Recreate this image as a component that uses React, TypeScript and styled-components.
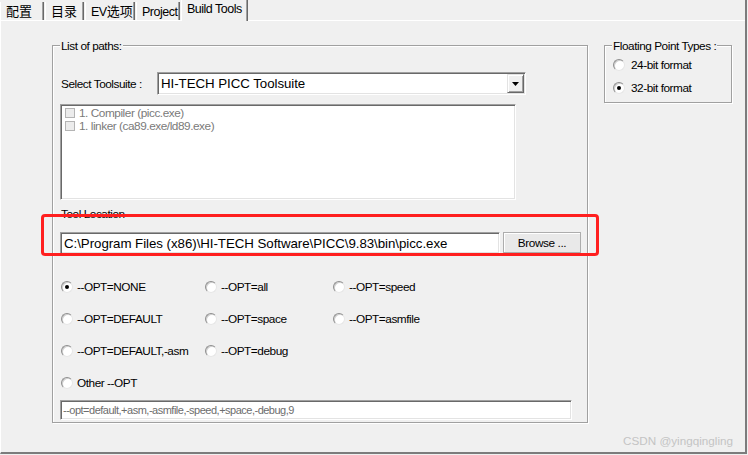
import React from 'react'
import styled, { createGlobalStyle } from 'styled-components'

const GlobalStyle = createGlobalStyle`
  html, body {
    margin: 0;
    padding: 0;
    background: #f0f0f0;
  }

  body {
    font-family: 'Liberation Sans', Arial, 'Noto Sans CJK SC', sans-serif;
    color: #000;
  }
`

const Window = styled.div`
  width: 747px;
  height: 454px;
  box-sizing: border-box;
  border-right: 2px solid #7c7c7c;
  background: #f0f0f0;
  display: flex;
  flex-direction: column;
  overflow: hidden;
`

const TabBar = styled.div`
  height: 20px;
  flex: none;
  display: flex;
  align-items: flex-end;
  gap: 1px;
`

const Tab = styled.div<{ $active?: boolean; $w: number }>`
  position: relative;
  z-index: 1;
  box-sizing: border-box;
  width: ${(p) => p.$w}px;
  height: ${(p) => (p.$active ? 21 : 18)}px;
  margin-bottom: ${(p) => (p.$active ? -1 : 0)}px;
  padding: ${(p) => (p.$active ? 1 : 2)}px 0 0 5px;
  font-size: 12.5px;
  line-height: 16px;
  letter-spacing: -0.5px;
  white-space: nowrap;
  background: #f0f0f0;
  border-left: 1px solid #fff;
  border-right: 1px solid #696969;
  box-shadow: inset -1px 0 0 #a0a0a0;

  .cjk {
    font-size: 13px;
    letter-spacing: 0;
  }
`

const Page = styled.div`
  position: relative;
  flex: 1;
  box-sizing: border-box;
  border-top: 1px solid #fff;
  border-left: 1px solid #fff;
  border-bottom: 2px solid #7c7c7c;
  padding: 24px 0 0 51px;
  display: flex;
  align-items: flex-start;
  gap: 16px;
`

const GroupBox = styled.div<{ $w: number; $h: number }>`
  position: relative;
  box-sizing: border-box;
  width: ${(p) => p.$w}px;
  height: ${(p) => p.$h}px;
  border: 1px solid #a0a0a0;
  box-shadow: inset 1px 1px 0 #fff, 1px 1px 0 #fff;
`

const Legend = styled.span`
  position: absolute;
  top: -6px;
  left: 7px;
  padding: 0 1px;
  background: #f0f0f0;
  font-size: 11.8px;
  line-height: 13px;
  letter-spacing: -0.45px;
  white-space: nowrap;
`

const GroupBody = styled.div<{ $top: number; $left: number }>`
  display: flex;
  flex-direction: column;
  align-items: flex-start;
  padding: ${(p) => p.$top}px 0 0 ${(p) => p.$left}px;
`

const Label = styled.div`
  font-size: 11.8px;
  line-height: 14px;
  letter-spacing: -0.45px;
  white-space: nowrap;
`

const SelectRow = styled.div`
  display: flex;
  align-items: flex-start;
  height: 23px;
`

const SelectLabel = styled(Label)`
  width: 97px;
  padding: 5px 0 0 1px;
  box-sizing: border-box;
`

const sunken = `
  box-sizing: border-box;
  background: #fff;
  border: 1px solid;
  border-color: #a0a0a0 #fff #fff #a0a0a0;
  box-shadow: inset 1px 1px 0 #696969, inset -1px -1px 0 #e3e3e3;
`

const Combo = styled.div`
  ${sunken}
  width: 369px;
  height: 23px;
  display: flex;
  align-items: center;
  padding: 1px 1px 1px 3px;
  font-size: 13.3px;
  letter-spacing: -0.05px;
`

const DropButton = styled.div`
  margin-left: auto;
  box-sizing: border-box;
  width: 17px;
  height: 19px;
  background: #f0f0f0;
  border: 1px solid;
  border-color: #e3e3e3 #696969 #696969 #e3e3e3;
  box-shadow: inset 1px 1px 0 #fff, inset -1px -1px 0 #a0a0a0;
  display: flex;
  align-items: center;
  justify-content: center;
`

const ListBox = styled.div`
  ${sunken}
  margin-top: 9px;
  width: 456px;
  height: 96px;
  padding: 1px 0 0 4px;
`

const ListItem = styled.div`
  display: flex;
  align-items: center;
  gap: 4px;
  height: 13px;
  font-size: 11.8px;
  letter-spacing: -0.45px;
  color: #7a7a7a;
  white-space: nowrap;
`

const CheckBox = styled.span`
  box-sizing: border-box;
  width: 10px;
  height: 10px;
  border: 1px solid #b4b4b4;
  background: #ececec;
`

const ToolLabel = styled(Label)`
  margin-top: 7px;
  padding-left: 1px;
`

const PathRow = styled.div`
  margin-top: 11px;
  display: flex;
  align-items: flex-start;
  gap: 3px;
`

const PathInput = styled.div`
  ${sunken}
  width: 440px;
  height: 22px;
  display: flex;
  align-items: center;
  padding-left: 3px;
  font-size: 13.3px;
  letter-spacing: -0.05px;
  white-space: nowrap;
`

const Button = styled.div`
  box-sizing: border-box;
  width: 78px;
  height: 21px;
  display: flex;
  align-items: center;
  justify-content: center;
  background: #e9e9e9;
  border: 1px solid #adadad;
  box-shadow: inset 1px 1px 0 #fff;
  font-size: 11.8px;
  letter-spacing: -0.4px;
`

const RadioGrid = styled.div`
  margin: 17px 0 0 1px;
  display: grid;
  grid-template-columns: 144px 128px auto;
  grid-auto-rows: 32px;
`

const RadioOption = styled.label<{ $gap: number; $h?: number }>`
  display: flex;
  align-items: center;
  gap: ${(p) => p.$gap}px;
  height: ${(p) => p.$h ?? 32}px;
  font-size: 11.8px;
  letter-spacing: -0.45px;
  white-space: nowrap;
`

const RadioDot = styled.span<{ $checked?: boolean }>`
  position: relative;
  flex: none;
  box-sizing: border-box;
  width: 12px;
  height: 12px;
  border-radius: 50%;
  background: #fff;
  border: 1px solid;
  border-color: #8e8e8e #e6e6e6 #e6e6e6 #8e8e8e;
  box-shadow: inset 1px 1px 0 #cfcfcf;

  &::after {
    content: '';
    display: ${(p) => (p.$checked ? 'block' : 'none')};
    position: absolute;
    left: 3px;
    top: 3px;
    width: 4px;
    height: 4px;
    border-radius: 50%;
    background: #000;
  }
`

const OptInput = styled.div`
  ${sunken}
  margin-top: 1px;
  width: 512px;
  height: 20px;
  display: flex;
  align-items: center;
  padding-left: 2px;
  font-size: 11px;
  letter-spacing: -0.5px;
  color: #6d6d6d;
  white-space: nowrap;
`

const Highlight = styled.div`
  position: absolute;
  left: 40px;
  top: 193px;
  width: 558px;
  height: 42px;
  box-sizing: border-box;
  border: 3px solid #ff1f1f;
  border-radius: 4px;
  pointer-events: none;
`

const Watermark = styled.div`
  position: absolute;
  right: 12px;
  bottom: 4px;
  font-size: 11.7px;
  line-height: 14px;
  color: #c4c4c4;
  white-space: nowrap;
`

const tabs = [
  { label: '配置', w: 44 },
  { label: '目录', w: 39 },
  { label: 'EV选项', w: 50 },
  { label: 'Project', w: 44 },
  { label: 'Build Tools', w: 67, active: true },
]

const optRows = [
  ['--OPT=NONE', '--OPT=all', '--OPT=speed'],
  ['--OPT=DEFAULT', '--OPT=space', '--OPT=asmfile'],
  ['--OPT=DEFAULT,-asm', '--OPT=debug'],
  ['Other --OPT'],
]

function TabLabel({ text }: { text: string }) {
  // latin and CJK parts get slightly different sizes
  const parts = text.split(/([\u4e00-\u9fff]+)/).filter(Boolean)
  return (
    <>
      {parts.map((part, i) =>
        /[\u4e00-\u9fff]/.test(part) ? (
          <span className='cjk' key={i}>
            {part}
          </span>
        ) : (
          <span key={i}>{part}</span>
        )
      )}
    </>
  )
}

export default function App(): JSX.Element {
  return (
    <Window>
      <GlobalStyle />
      <TabBar>
        {tabs.map((t) => (
          <Tab key={t.label} $w={t.w} $active={t.active}>
            <TabLabel text={t.label} />
          </Tab>
        ))}
      </TabBar>

      <Page>
        <GroupBox $w={536} $h={378}>
          <Legend>List of paths:</Legend>
          <GroupBody $top={26} $left={7}>
            <SelectRow>
              <SelectLabel>Select Toolsuite :</SelectLabel>
              <Combo>
                HI-TECH PICC Toolsuite
                <DropButton>
                  <svg width='7' height='4' viewBox='0 0 7 4'>
                    <path d='M0 0h7L3.5 4z' fill='#000' />
                  </svg>
                </DropButton>
              </Combo>
            </SelectRow>

            <ListBox>
              <ListItem>
                <CheckBox />
                1. Compiler (picc.exe)
              </ListItem>
              <ListItem>
                <CheckBox />
                1. linker (ca89.exe/ld89.exe)
              </ListItem>
            </ListBox>

            <ToolLabel>Tool Location</ToolLabel>
            <PathRow>
              <PathInput>
                C:\Program Files (x86)\HI-TECH Software\PICC\9.83\bin\picc.exe
              </PathInput>
              <Button>Browse ...</Button>
            </PathRow>

            <RadioGrid>
              {optRows.map((row, r) =>
                row.map((opt, c) => (
                  <RadioOption
                    key={opt}
                    $gap={4}
                    style={{ gridRow: r + 1, gridColumn: c + 1 }}
                  >
                    <RadioDot $checked={r === 0 && c === 0} />
                    {opt}
                  </RadioOption>
                ))
              )}
            </RadioGrid>

            <OptInput>--opt=default,+asm,-asmfile,-speed,+space,-debug,9</OptInput>
          </GroupBody>
        </GroupBox>

        <GroupBox $w={128} $h={58}>
          <Legend>Floating Point Types :</Legend>
          <GroupBody $top={7} $left={8}>
            <RadioOption $gap={6} $h={23}>
              <RadioDot />
              24-bit format
            </RadioOption>
            <RadioOption $gap={6} $h={23}>
              <RadioDot $checked />
              32-bit format
            </RadioOption>
          </GroupBody>
        </GroupBox>

        <Highlight />
        <Watermark>CSDN @yingqingling</Watermark>
      </Page>
    </Window>
  )
}
